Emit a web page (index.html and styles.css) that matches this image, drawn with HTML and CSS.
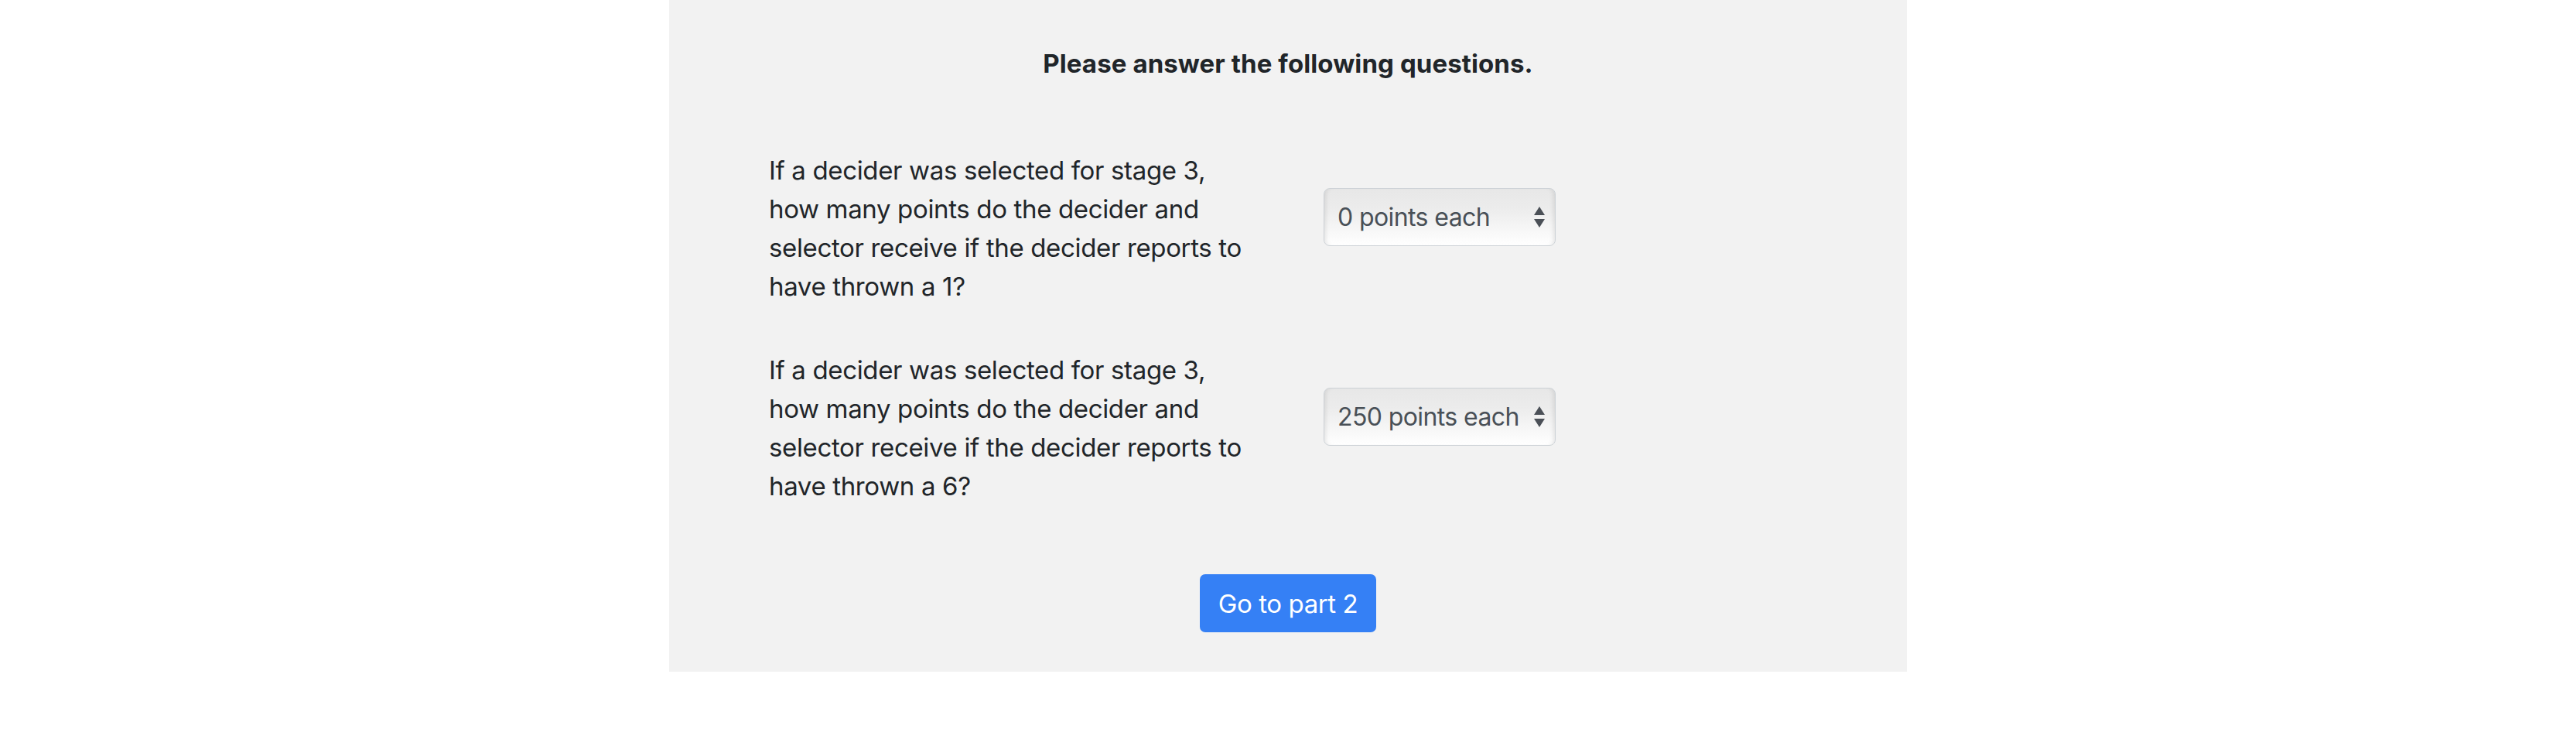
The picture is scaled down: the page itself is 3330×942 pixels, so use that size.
FILE: index.html
```html
<!DOCTYPE html>
<html lang="en">
<head>
<meta charset="utf-8">
<title>Questions</title>
<link rel="stylesheet" href="styles.css">
</head>
<body>
<main class="panel">
  <h1 class="title">Please answer the following questions.</h1>
  <div class="questions">
    <div class="question">
      <label class="q-text" for="q1">If a decider was selected for stage 3,<br>how many points do the decider and<br>selector receive if the decider reports to<br>have thrown a 1?</label>
      <div class="select-wrap">
        <select id="q1" class="select">
          <option>0 points each</option>
          <option>250 points each</option>
        </select>
        <svg class="arrows" width="16" height="28" viewBox="0 0 16 28"><path d="M8 0 L15 11 L1 11 Z M8 27 L15 16 L1 16 Z" fill="#4b5057"/></svg>
      </div>
    </div>
    <div class="question">
      <label class="q-text" for="q2">If a decider was selected for stage 3,<br>how many points do the decider and<br>selector receive if the decider reports to<br>have thrown a 6?</label>
      <div class="select-wrap">
        <select id="q2" class="select">
          <option>0 points each</option>
          <option selected>250 points each</option>
        </select>
        <svg class="arrows" width="16" height="28" viewBox="0 0 16 28"><path d="M8 0 L15 11 L1 11 Z M8 27 L15 16 L1 16 Z" fill="#4b5057"/></svg>
      </div>
    </div>
  </div>
  <div class="actions">
    <button class="btn" type="button">Go to part 2</button>
  </div>
</main>
</body>
</html>
```

FILE: styles.css
```css
html, body {
  margin: 0;
  padding: 0;
  background: #ffffff;
}

body {
  font-family: Inter, "Liberation Sans", Arial, sans-serif;
  color: #212529;
}

.panel {
  width: 1600px;
  margin: 0 auto;
  background: #f2f2f2;
  padding: 57px 0 51px;
  box-sizing: border-box;
}

.title {
  margin: 0;
  font-size: 33px;
  line-height: 50px;
  font-weight: 700;
  text-align: center;
  letter-spacing: 0.1px;
}

.questions {
  margin-top: 88px;
  padding-left: 129px;
  display: flex;
  flex-direction: column;
  gap: 58px;
}

.question {
  display: grid;
  grid-template-columns: 717px 300px;
  align-items: start;
}

.q-text {
  font-size: 33px;
  line-height: 50px;
  letter-spacing: -0.35px;
  white-space: nowrap;
}

.select-wrap {
  position: relative;
  margin-top: 48px;
  width: 300px;
  height: 75px;
}

.select {
  appearance: none;
  -webkit-appearance: none;
  width: 300px;
  height: 75px;
  margin: 0;
  box-sizing: border-box;
  border: 1.5px solid #cdd2d7;
  border-radius: 8px;
  background: linear-gradient(#e7e7e7 0%, #ececec 35%, #f6f6f6 70%, #ffffff 100%);
  box-shadow: inset 6px 0 6px -5px rgba(0,0,0,0.12), inset -6px 0 6px -5px rgba(0,0,0,0.12);
  font-family: Inter, "Liberation Sans", Arial, sans-serif;
  font-size: 32px;
  color: #495057;
  padding: 0 26px 0 17px;
  letter-spacing: -0.6px;
}

.arrows {
  position: absolute;
  right: 13px;
  top: 24px;
  pointer-events: none;
}

.actions {
  margin-top: 89px;
  display: flex;
  justify-content: center;
}

.btn {
  font-family: Inter, "Liberation Sans", Arial, sans-serif;
  font-size: 33px;
  line-height: 50px;
  color: #ffffff;
  background: #3580f5;
  border: 0;
  border-radius: 7px;
  padding: 12.5px 24px;
  letter-spacing: -0.4px;
  cursor: pointer;
}
```
